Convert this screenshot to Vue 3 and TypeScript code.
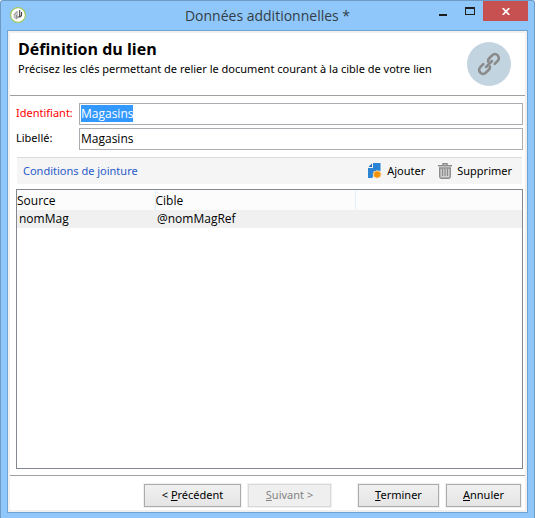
<script setup lang="ts">
import { onMounted, ref } from 'vue'

interface Join {
  source: string
  target: string
}

const identifier = ref('Magasins')
const label = ref('Magasins')
const identifierInput = ref<HTMLInputElement | null>(null)
const joins = ref<Join[]>([{ source: 'nomMag', target: '@nomMagRef' }])
const selected = ref(0)

function addJoin() {
  joins.value.push({ source: '', target: '' })
  selected.value = joins.value.length - 1
}

function removeJoin() {
  joins.value.splice(selected.value, 1)
  selected.value = 0
}

onMounted(() => {
  identifierInput.value?.focus()
  identifierInput.value?.select()
})
</script>

<template>
  <div class="window">
    <header class="titlebar">
      <svg class="app-icon" viewBox="0 0 16 16" aria-hidden="true">
        <circle cx="8" cy="8" r="7.400" fill="#fff" stroke="#a3c860" stroke-width="1.200" />
        <path d="M3.500 11V7.500L6.500 4h1.500v7.500l-2 1z" fill="#c4c4c4" />
        <path d="M4 8l3-3.500M6.500 12V8" stroke="#999" fill="none" />
        <path d="M9.700 3v7M7.500 10h2.500l1.500-1.500V5" stroke="#444" stroke-width="1.100" fill="none" />
      </svg>
      <h1 class="caption">Données additionnelles *</h1>
      <div class="window-buttons">
        <button class="win-btn min" type="button" aria-label="Réduire">
          <svg width="8" height="8" viewBox="0 0 8 8"><path d="M0 5h8v2H0z" fill="#1e1e1e" /></svg>
        </button>
        <button class="win-btn max" type="button" aria-label="Agrandir">
          <svg width="10" height="8" viewBox="0 0 10 8"><path d="M0 0h10v8H0zM1 2v5h8V2z" fill="#1e1e1e" fill-rule="evenodd" /></svg>
        </button>
        <button class="win-btn close" type="button" aria-label="Fermer">
          <svg width="8" height="7" viewBox="0 0 8 7"><path d="M.7 0l6.600 7M7.300 0L.7 7" stroke="#fff" stroke-width="1.700" /></svg>
        </button>
      </div>
    </header>

    <main class="pane">
      <section class="intro">
        <div class="intro-text">
          <h2>Définition du lien</h2>
          <p>Précisez les clés permettant de relier le document courant à la cible de votre lien</p>
        </div>
        <svg class="link-badge" viewBox="0 0 44 44" aria-hidden="true">
          <circle cx="22" cy="22" r="22" fill="#c2d4e0" />
          <g transform="translate(22 22) rotate(-45) scale(.93)" fill="none" stroke="#8a8a8a" stroke-width="2.800" stroke-linecap="round">
            <path d="M-4.500 -4.200H-9A4.200 4.200 0 0 0 -9 4.200H-4.500A4.200 4.200 0 0 0 -1.200 2.600" />
            <path d="M4.500 4.200H9A4.200 4.200 0 0 0 9 -4.200H4.500A4.200 4.200 0 0 0 1.200 -2.600" />
            <path d="M-4.500 0H4.500" />
          </g>
        </svg>
      </section>

      <form class="fields" @submit.prevent>
        <label class="required" for="identifier">Identifiant:</label>
        <input id="identifier" ref="identifierInput" v-model="identifier" type="text" />
        <label for="label">Libellé:</label>
        <input id="label" v-model="label" type="text" />
      </form>

      <div class="toolbar">
        <h3>Conditions de jointure</h3>
        <button class="tool" type="button" @click="addJoin">
          <svg width="14" height="16" viewBox="0 0 14 16" aria-hidden="true">
            <path d="M5 0h7.500v8L9 7.500 5.500 10 4.500 15H0V5h5z" fill="#2b83d3" />
            <path d="M.5 4L4 .5V4z" fill="#1f6cb0" />
            <path d="M9 7l1.300 1.300 1.900-.5.500 1.900L14 11.500l-1.300 1.300-.5 1.900-1.900-.5L9 16l-1.300-1.800-1.900.5-.5-1.900L4.500 11.500l.8-1.800.5-1.900 1.900.5z" fill="#f8c987" />
            <circle cx="9.200" cy="11.500" r="3" fill="#f39200" />
          </svg>
          Ajouter
        </button>
        <button class="tool" type="button" @click="removeJoin">
          <svg width="14" height="16" viewBox="0 0 14 16" aria-hidden="true">
            <path d="M5 2V.7h4V2M0 2.700h14" fill="none" stroke="#8c8c8c" stroke-width="1.500" />
            <path d="M1.700 5v8.500q0 1.700 1.700 1.700h7.200q1.700 0 1.700-1.700V5z" fill="#d0d0d0" stroke="#8c8c8c" stroke-width="1.400" />
            <path d="M4.500 6v7M7 6v7M9.500 6v7" stroke="#8c8c8c" stroke-width="1.200" />
          </svg>
          Supprimer
        </button>
      </div>

      <div class="list">
        <table>
          <colgroup>
            <col class="col-source" />
            <col class="col-target" />
            <col />
          </colgroup>
          <thead>
            <tr>
              <th scope="col">Source</th>
              <th scope="col">Cible</th>
              <td></td>
            </tr>
          </thead>
          <tbody>
            <tr v-for="(join, i) in joins" :key="i" :class="{ selected: i === selected }" @click="selected = i">
              <td>{{ join.source }}</td>
              <td>{{ join.target }}</td>
              <td></td>
            </tr>
          </tbody>
        </table>
      </div>

      <footer class="actions">
        <button class="btn previous" type="button">&lt; <u>P</u>récédent</button>
        <button class="btn next" type="button" disabled><u>S</u>uivant &gt;</button>
        <button class="btn finish" type="button"><u>T</u>erminer</button>
        <button class="btn cancel" type="button"><u>A</u>nnuler</button>
      </footer>
    </main>
  </div>
</template>

<style>
body {
  background: #fff;
}
</style>

<style scoped>
.window {
  box-sizing: border-box;
  display: flex;
  flex-direction: column;
  min-height: 100vh;
  margin-right: 18px;
  padding: 0 6px 5px 6px;
  border: 1px solid #6c9cc6;
  border-bottom: 0;
  border-radius: 3px 3px 0 0;
  background: #8fc7fa;
  color: #000;
  font: 11px/16px "Noto Sans", "Open Sans", sans-serif;
}

h1,
h2,
h3,
p {
  margin: 0;
}

button,
input {
  box-sizing: border-box;
  margin: 0;
  font: inherit;
  color: inherit;
}

.titlebar {
  display: grid;
  grid-template-columns: 110px 1fr 110px;
  height: 29px;
}

.app-icon {
  width: 16px;
  height: 16px;
  margin: 6px 0 0 3px;
}

.caption {
  font-family: "Open Sans", sans-serif;
  font-size: 14px;
  font-weight: 400;
  line-height: 29px;
  text-align: center;
  white-space: nowrap;
  color: #333d47;
}

.window-buttons {
  display: flex;
  justify-content: flex-end;
  height: 20px;
}

.win-btn {
  display: flex;
  align-items: center;
  justify-content: center;
  width: 27px;
  padding: 0;
  border: 0;
  background: transparent;
}

.win-btn.min {
  padding-top: 4px;
}

.win-btn.close {
  width: 45px;
  background: #c75050;
}

.pane {
  display: flex;
  flex: 1;
  flex-direction: column;
  border: 1px solid #6fa3d2;
  background: #fff;
  box-shadow: inset 0 0 0 2px #f0f0f0;
  padding: 2px;
}

.intro {
  display: flex;
  align-items: flex-end;
  justify-content: space-between;
  padding: 9px 14px 9px 8px;
  border-bottom: 1px solid #a0a0a0;
}

.intro-text {
  align-self: flex-start;
}

.intro h2 {
  font-family: "Open Sans", sans-serif;
  font-size: 16px;
  font-weight: 700;
  line-height: 14px;
}

.intro p {
  margin-top: 5px;
}

.link-badge {
  flex: none;
  width: 44px;
  height: 44px;
}

.fields {
  display: grid;
  grid-template-columns: 59px 1fr;
  gap: 3px 4px;
  padding: 7px 2px 7px 6px;
  align-items: center;
}

.fields label {
  padding-bottom: 2px;
  white-space: nowrap;
}

.required {
  color: #f00;
}

.fields input {
  width: 100%;
  height: 22px;
  padding: 0 1px 2px;
  border: 1px solid #abadb3;
  border-radius: 0;
  outline: 0;
  background: #fff;
  font-family: "Open Sans", sans-serif;
  font-size: 12px;
}

.fields input::selection {
  background: #3399ff;
  color: #fff;
}

.toolbar {
  display: flex;
  align-items: center;
  height: 26px;
  margin: 0 3px 0 7px;
  padding: 0 10px 0 6px;
  border-top: 1px solid #dcdcdc;
  background: #f5f5f5;
}

.toolbar h3 {
  flex: 1;
  font-size: 11px;
  font-weight: 400;
  color: #2a5bc8;
}

.tool {
  display: flex;
  align-items: center;
  gap: 5px;
  margin-left: 13px;
  padding: 0;
  border: 0;
  background: transparent;
}

.list {
  flex: 1;
  margin: 5px 2px 6px 6px;
  border: 1px solid #828790;
}

table {
  width: 100%;
  border-collapse: collapse;
  table-layout: fixed;
  font-family: "Open Sans", sans-serif;
  font-size: 12px;
}

.col-source {
  width: 138px;
}

.col-target {
  width: 200px;
}

th,
td {
  padding: 0;
  font-weight: 400;
  line-height: 18px;
  text-align: left;
}

thead tr {
  height: 20px;
  background: #fcfcfc;
}

th {
  padding-top: 2px;
  border-right: 1px solid #e5effb;
}

tbody td {
  height: 18px;
  padding-left: 2px;
}

.selected {
  background: #f0f0f0;
}

.actions {
  display: flex;
  justify-content: flex-end;
  padding: 8px 4px 3px;
  border-top: 1px solid #a0a0a0;
}

.btn {
  height: 23px;
  padding: 0 0 1px;
  border: 1px solid #acacac;
  border-radius: 0;
  background: linear-gradient(#f0f0f0, #e5e5e5);
  box-shadow: 0 0 0 1px #f0f0f0;
}

.btn:disabled {
  border-color: #d9d9d9;
  background: #efefef;
  color: #838383;
}

.previous {
  width: 97px;
}

.next {
  width: 83px;
  margin-left: 7px;
}

.finish {
  width: 81px;
  margin-left: 27px;
}

.cancel {
  width: 75px;
  margin-left: 7px;
}
</style>
